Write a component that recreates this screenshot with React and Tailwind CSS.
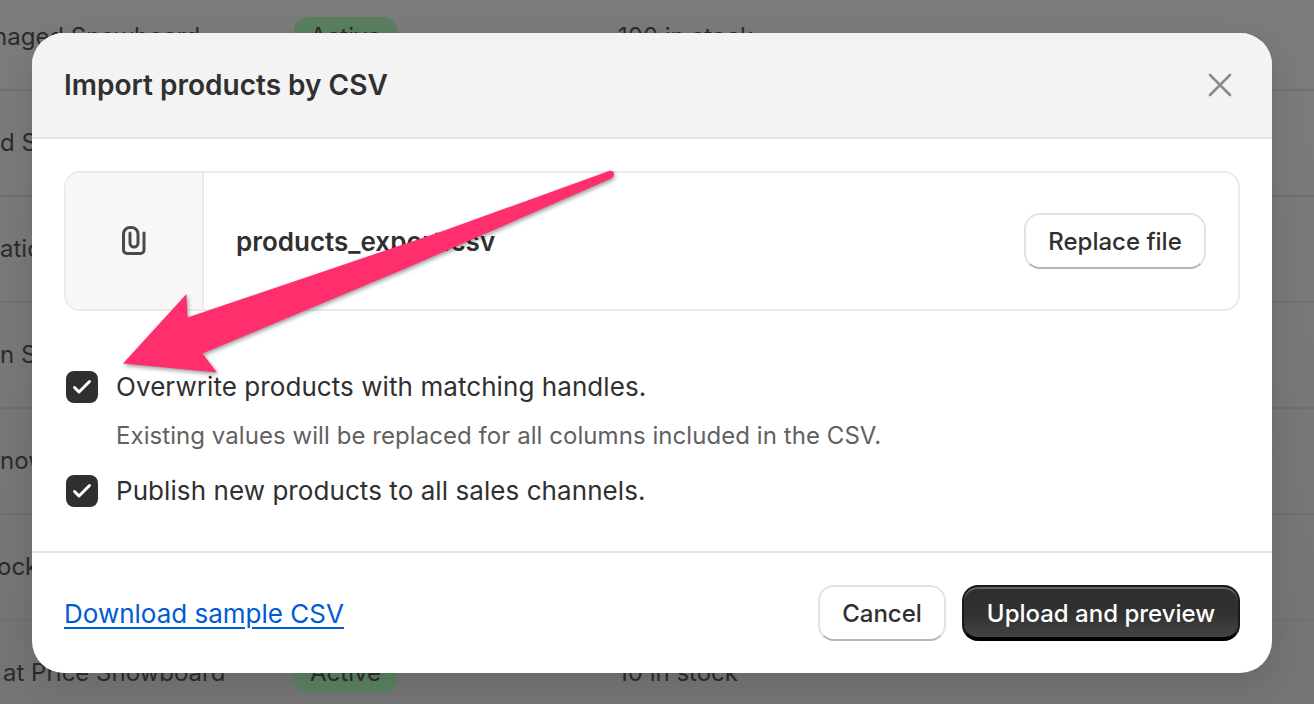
import React from "react";

const FONT = "font-['Inter','Noto_Sans',sans-serif]";

const rows = [
  { name: "naged Snowboard", offset: "ml-[-7px]", stock: "100 in stock", badge: true },
  { name: "d Snowboard", offset: "ml-0" },
  { name: "ations", offset: "ml-0" },
  { name: "n Snowboard", offset: "ml-0" },
  { name: "nowboard", offset: "ml-0" },
  { name: "ock", offset: "ml-[-3px]" },
  { name: "at Price Snowboard", offset: "ml-[3px]", stock: "10 in stock", badge: true },
];

const BackgroundTable = () => (
  <div className="h-full overflow-hidden bg-gradient-to-b from-[#7c7c7c] to-[#747474] text-[24px] text-[#2b2b2b]">
    <div className="-mt-[15px]">
      {rows.map((row) => (
        <div key={row.name} className="flex h-[106px] items-center border-b-2 border-[#707070] whitespace-nowrap">
          <div className="w-[294px] shrink-0 overflow-hidden">
            <span className={`block ${row.offset}`}>{row.name}</span>
          </div>
          <div className="w-[324px] shrink-0">
            {row.badge && (
              <span className="flex h-[40px] w-[103px] items-center justify-center rounded-[14px] bg-[#5a8060]">Active</span>
            )}
          </div>
          <div>{row.stock}</div>
        </div>
      ))}
    </div>
  </div>
);

const Check = () => (
  <span className="flex h-[32px] w-[32px] shrink-0 items-center justify-center rounded-[8px] bg-[#303030]">
    <svg width="32" height="32" viewBox="0 0 32 32" fill="none">
      <path d="M8.500 16.500 13 21 23.500 10.500" stroke="#fff" strokeWidth="3" strokeLinecap="round" strokeLinejoin="round" />
    </svg>
  </span>
);

const PaperClip = () => (
  <svg width="30" height="34" viewBox="0 0 30 34" fill="none">
    <path
      d="M25 9V26a3.5 3.5 0 0 1-3.5 3.5H8A3.5 3.5 0 0 1 4.5 26V10A6.5 6.5 0 0 1 11 3.5h1.5A6.5 6.5 0 0 1 19 10V19a4 4 0 0 1-8 0V9"
      stroke="#4a4a4a"
      strokeWidth="3"
      strokeLinecap="round"
      strokeLinejoin="round"
    />
  </svg>
);

const Arrow = () => (
  <svg
    className="absolute left-0 top-0 drop-shadow-[1px_2px_2px_rgba(0,0,0,0.4)]"
    width="1314"
    height="704"
    viewBox="0 0 1314 704"
    fill="none"
  >
    <path
      d="M609 171Q614 170 614 174.500Q614 177 610 179L410 266.500L202.500 353.500L217 372.500L123 363.500L186.500 294L187.500 317.500L443 231Z"
      fill="#ff2f6e"
    />
  </svg>
);

export default function App() {
  return (
    <div className={`relative h-[704px] w-[1314px] overflow-hidden ${FONT}`}>
      <BackgroundTable />

      {/* Import modal */}
      <div className="absolute inset-0 pl-[32px] pt-[33px]">
        <div className="flex h-[640px] w-[1240px] flex-col overflow-hidden rounded-[32px] bg-white text-[#303030] shadow-[0_8px_32px_rgba(0,0,0,0.12)]">
          <div className="flex h-[106px] shrink-0 items-center justify-between border-b-2 border-[#e3e3e3] bg-[#f3f3f3] pl-[32px] pr-[40px]">
            <h2 className="text-[28px] font-semibold">Import products by CSV</h2>
            <svg width="24" height="24" viewBox="0 0 24 24" fill="none">
              <path d="M2 2 22 22M22 2 2 22" stroke="#8a8a8a" strokeWidth="2.6" strokeLinecap="round" />
            </svg>
          </div>

          <div className="flex-1 px-[32px] pt-[32px]">
            <div className="flex h-[140px] overflow-hidden rounded-[16px] border-2 border-[#ebebeb]">
              <div className="flex w-[138px] shrink-0 items-center justify-center border-r-2 border-[#ebebeb] bg-[#f7f7f7]">
                <PaperClip />
              </div>
              <div className="flex flex-1 items-center justify-between px-[32px]">
                <span className="text-[26px] font-semibold">products_export.csv</span>
                <button className="h-[56px] w-[182px] rounded-[16px] border-2 border-[#e3e3e3] border-b-[#b5b5b5] bg-white pt-[2px] text-[24px] font-medium">
                  Replace file
                </button>
              </div>
            </div>

            <div className="mt-[60px] flex items-center gap-[18px] pl-[2px] text-[26px] leading-[32px] tracking-[0.07px]">
              <Check />
              <span>Overwrite products with matching handles.</span>
            </div>
            <p className="mt-[17px] pl-[52px] text-[24px] leading-[32px] tracking-[0.06px] text-[#616161]">
              Existing values will be replaced for all columns included in the CSV.
            </p>
            <div className="mt-[23px] flex items-center gap-[18px] pl-[2px] text-[26px] leading-[32px] tracking-[0.07px]">
              <Check />
              <span>Publish new products to all sales channels.</span>
            </div>
          </div>

          <div className="flex h-[122px] shrink-0 items-center justify-between border-t-2 border-[#e3e3e3] px-[32px]">
            <a className="text-[26px] text-[#005bd3] underline underline-offset-[4px]" href="#">
              Download sample CSV
            </a>
            <div className="flex gap-[16px]">
              <button className="h-[56px] w-[128px] rounded-[16px] border-2 border-[#e3e3e3] border-b-[#b5b5b5] bg-white pt-[2px] text-[24px] font-medium">
                Cancel
              </button>
              <button className="h-[56px] w-[278px] rounded-[16px] border-2 border-[#1a1a1a] border-b-[4px] border-b-black bg-gradient-to-b from-[#2f2f2f] via-[#303030] to-[#434343] pt-[3px] text-[24px] font-medium text-white shadow-[inset_0_2px_0_rgba(255,255,255,0.25)]">
                Upload and preview
              </button>
            </div>
          </div>
        </div>
      </div>

      <Arrow />
    </div>
  );
}
